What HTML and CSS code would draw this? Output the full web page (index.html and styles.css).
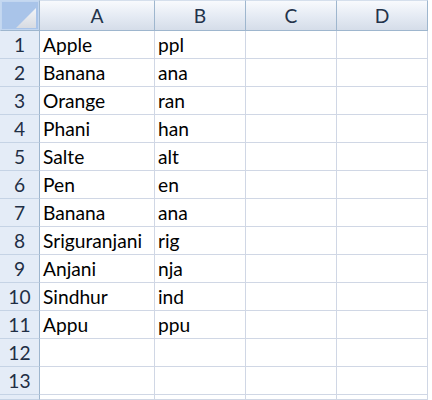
FILE: index.html
```html
<!DOCTYPE html>
<html>
<head>
<meta charset="utf-8">
<link rel="stylesheet" href="styles.css">
</head>
<body>
<div class="sheet">
  <div class="hd corner"></div>
  <div class="hd col">A</div>
  <div class="hd col">B</div>
  <div class="hd col">C</div>
  <div class="hd col">D</div>

  <div class="rh">1</div><div class="cell">Apple</div><div class="cell">ppl</div><div class="cell"></div><div class="cell"></div>
  <div class="rh">2</div><div class="cell">Banana</div><div class="cell">ana</div><div class="cell"></div><div class="cell"></div>
  <div class="rh">3</div><div class="cell">Orange</div><div class="cell">ran</div><div class="cell"></div><div class="cell"></div>
  <div class="rh">4</div><div class="cell">Phani</div><div class="cell">han</div><div class="cell"></div><div class="cell"></div>
  <div class="rh">5</div><div class="cell">Salte</div><div class="cell">alt</div><div class="cell"></div><div class="cell"></div>
  <div class="rh">6</div><div class="cell">Pen</div><div class="cell">en</div><div class="cell"></div><div class="cell"></div>
  <div class="rh">7</div><div class="cell">Banana</div><div class="cell">ana</div><div class="cell"></div><div class="cell"></div>
  <div class="rh">8</div><div class="cell">Sriguranjani</div><div class="cell">rig</div><div class="cell"></div><div class="cell"></div>
  <div class="rh">9</div><div class="cell">Anjani</div><div class="cell">nja</div><div class="cell"></div><div class="cell"></div>
  <div class="rh">10</div><div class="cell">Sindhur</div><div class="cell">ind</div><div class="cell"></div><div class="cell"></div>
  <div class="rh">11</div><div class="cell">Appu</div><div class="cell">ppu</div><div class="cell"></div><div class="cell"></div>
  <div class="rh">12</div><div class="cell"></div><div class="cell"></div><div class="cell"></div><div class="cell"></div>
  <div class="rh">13</div><div class="cell"></div><div class="cell"></div><div class="cell"></div><div class="cell"></div>
  <div class="rh"></div><div class="cell"></div><div class="cell"></div><div class="cell"></div><div class="cell"></div>
</div>
</body>
</html>
```
FILE: styles.css
```css
html, body {
  margin: 0;
  padding: 0;
  background: #ffffff;
  overflow: hidden;
}
.sheet {
  display: grid;
  grid-template-columns: 40px 115px 91px 91px 91px;
  grid-template-rows: 31px repeat(13, 28px) 5px;
  height: 400px;
  overflow: hidden;
  font-family: "Lato", "Open Sans", sans-serif;
  font-size: 19.2px;
  color: #000;
}
.sheet > div {
  box-sizing: border-box;
}
.hd {
  border-top: 1px solid #d5dfec;
  border-bottom: 1px solid #9eb6ce;
  border-right: 1px solid #9eb6ce;
  background: linear-gradient(#f8fafd, #e4eaf3 55%, #d5dde9);
  display: flex;
  align-items: center;
  justify-content: center;
  color: #23334a;
}
.corner {
  position: relative;
  background: #a9c4e9;
  border: 1px solid #c5d8f0;
  border-bottom-color: #9eb6ce;
  border-right-color: #9eb6ce;
  box-shadow: inset 0 0 0 1px #c2d6f0;
}
.corner::after {
  content: "";
  position: absolute;
  left: 15px;
  top: 7px;
  width: 20px;
  height: 20px;
  background: linear-gradient(#f2f4f7, #d7dbe2);
  clip-path: polygon(0 100%, 100% 0, 100% 100%);
}
.rh {
  background: #e4ecf7;
  border-right: 1px solid #9eb6ce;
  border-bottom: 1px solid #c5d3e5;
  display: flex;
  align-items: center;
  justify-content: center;
  color: #1f2f45;
}
.cell {
  border-right: 1px solid #d0d7e5;
  border-bottom: 1px solid #d0d7e5;
  display: flex;
  align-items: center;
  padding-left: 3px;
  white-space: nowrap;
  overflow: hidden;
}
```
